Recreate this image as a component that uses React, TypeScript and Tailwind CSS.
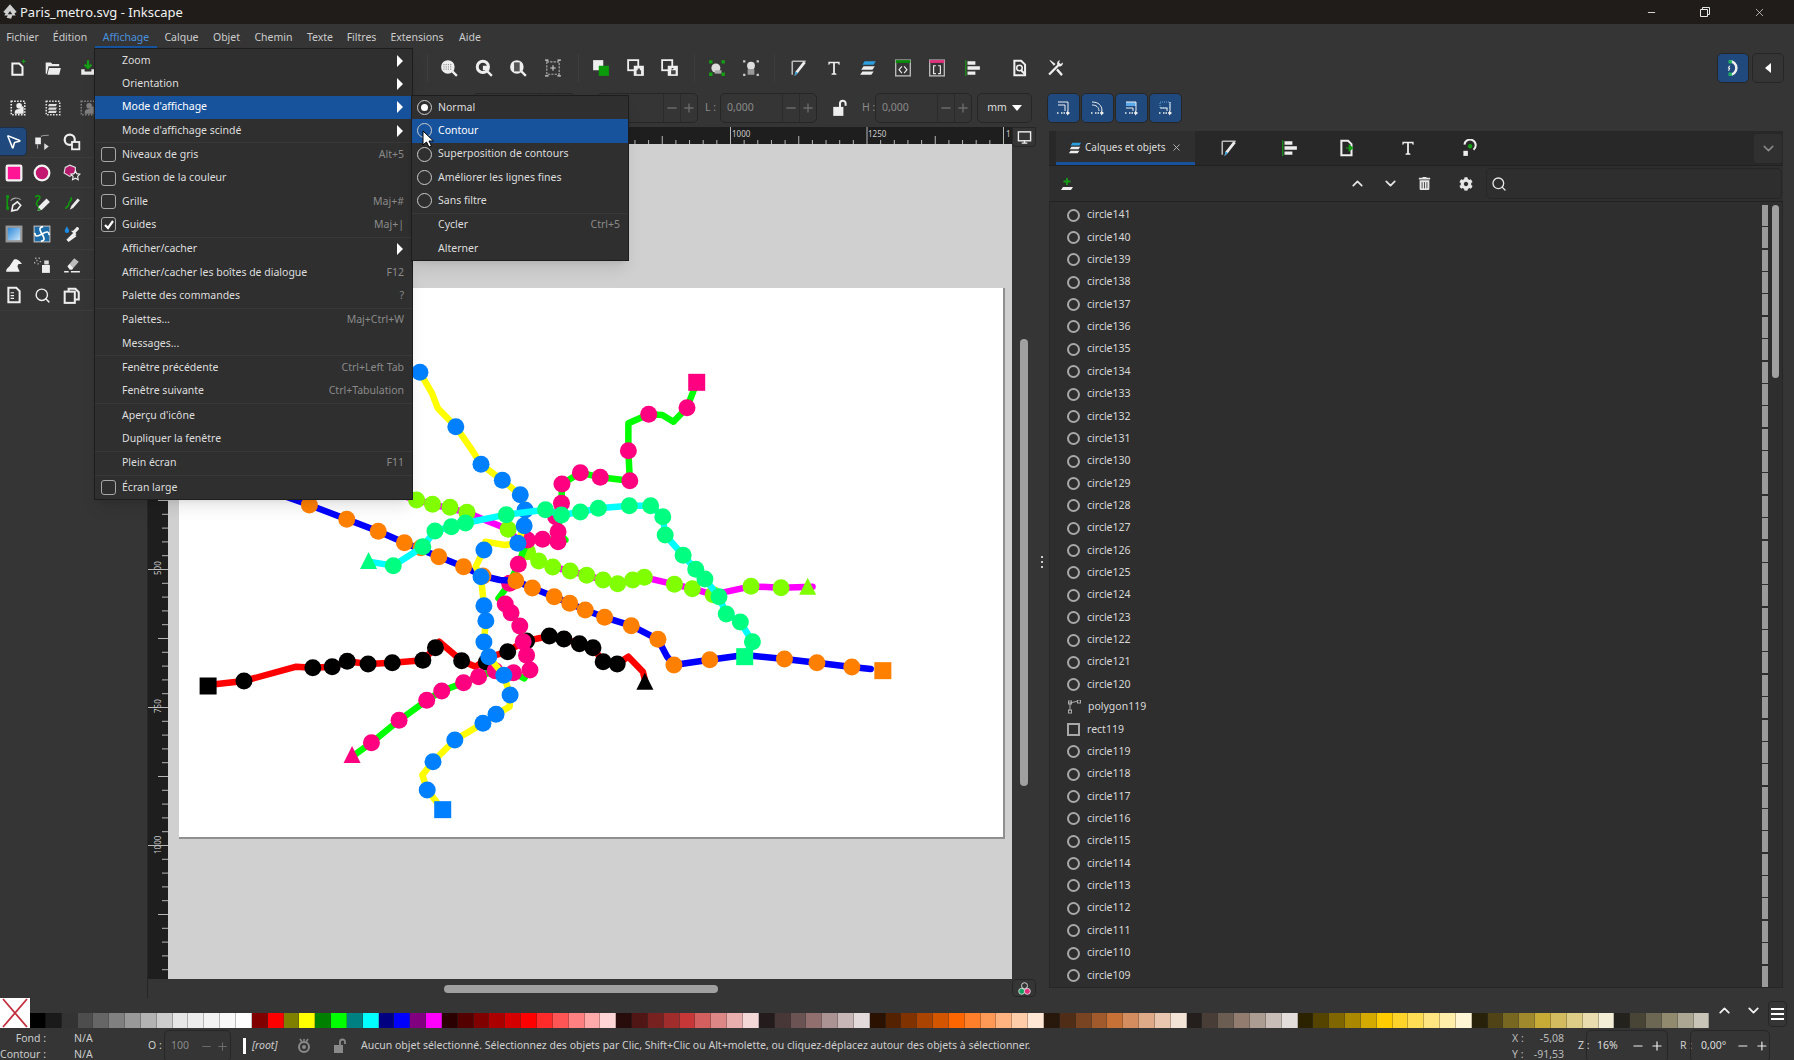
import type { ReactNode } from 'react';
import { ChevronDown, ChevronUp, Minus, MousePointer2, Plus, Search, X } from 'lucide-react';
import { FaCog, FaTrashAlt } from 'react-icons/fa';

type Pt = [number, number];

// map data is measured in a stretched crop, px() brings it back to page pixels
const px = ([x, y]: Pt): Pt => [160 + x / 2.063 - 178.4, 360 + y / 3 - 288];

function Icon({ children, size = 18 }: { children: ReactNode; size?: number }) {
    return (
        <svg viewBox="0 0 16 16" width={size} height={size} className="shrink-0">
            {children}
        </svg>
    );
}

const icons: Record<string, ReactNode> = {
    newDoc: (
        <>
            <path d="M3 4h6l3 3v7H3z" fill="none" stroke="#f2f2f2" strokeWidth="1.8" />
            <path d="M13 0l.7 1.6 1.6.4-1.6.7-.7 1.6-.7-1.6-1.6-.7 1.6-.4z" fill="#14a014" />
        </>
    ),
    open: <path d="M1.5 3h4.5l1.5 1.5h6v2H4L2.5 13h-1zM4.5 8h10.5l-1.5 6H3z" fill="#ececec" />,
    save: (
        <>
            <path d="M2 9h3v2h6V9h3v5H2z" fill="#ececec" />
            <path d="M8 1v7M5 5l3 3 3-3" fill="none" stroke="#14a014" strokeWidth="2" />
        </>
    ),
    selAll: (
        <>
            <rect x="2" y="2" width="12" height="12" fill="none" stroke="#eee" strokeWidth="1.4" strokeDasharray="1.4 1.2" />
            <path d="M5 13c0-3 1-4 3-4 3 0 3-4 5-2v6z" fill="#eee" />
            <circle cx="9" cy="6" r="2.5" fill="#eee" />
        </>
    ),
    layers: (
        <>
            <rect x="2" y="2" width="12" height="12" fill="none" stroke="#ddd" strokeWidth="1.4" strokeDasharray="1.4 1.2" />
            <path d="M4.5 4.5h7l-1 2h-7zM4.5 7.5h7l-1 2h-7zM4.5 10.5h7l-1 2h-7z" fill="#ddd" />
        </>
    ),
    zoomSel: (
        <>
            <circle cx="7" cy="7" r="6" fill="#eee" />
            <path d="M3 5h8M3 7h8M3 9h8" stroke="#666" strokeWidth=".7" strokeDasharray="1 1" />
            <path d="M11 11l4 4" stroke="#eee" strokeWidth="2" />
        </>
    ),
    zoomDraw: (
        <>
            <circle cx="7" cy="7" r="5" fill="none" stroke="#eee" strokeWidth="2.6" />
            <path d="M7 6h4v4H7z" fill="#eee" />
            <path d="M11 11l4 4" stroke="#eee" strokeWidth="2" />
        </>
    ),
    zoomPage: (
        <>
            <circle cx="7" cy="7" r="6" fill="#eee" />
            <rect x="4.5" y="3" width="5" height="8" fill="#555" />
            <path d="M11 11l4 4" stroke="#eee" strokeWidth="2" />
        </>
    ),
    center: (
        <>
            <rect x="2.5" y="2.5" width="11" height="11" fill="none" stroke="#aaa" strokeDasharray="2 1" />
            <path d="M8 5.5v5M5.5 8h5" stroke="#ccc" />
            <path d="M1 1h3M12 1h3M1 15h3M12 15h3" stroke="#ddd" />
        </>
    ),
    groupCol: (
        <>
            <rect x="1" y="1" width="9" height="9" fill="#eee" />
            <rect x="6" y="6" width="9" height="9" fill="#0a9a0a" />
        </>
    ),
    duplicate: (
        <>
            <rect x="1" y="1" width="9" height="9" fill="none" stroke="#eee" strokeWidth="1.6" />
            <rect x="6" y="6" width="9" height="9" fill="#eee" />
            <path d="M8.5 10h4v3.5h-4zM9.5 10V8.5h2V10" fill="#444" />
        </>
    ),
    unlink: (
        <>
            <rect x="1" y="1" width="9" height="9" fill="none" stroke="#eee" strokeWidth="1.6" />
            <rect x="6" y="6" width="9" height="9" fill="#eee" />
            <path d="M9 10h4v3.5H9zM9.5 10V8h2" fill="#444" />
        </>
    ),
    group: (
        <>
            <circle cx="7" cy="8" r="4" fill="#ddd" />
            <path d="M6 10h6v3H6z" fill="#aaa" />
            <path d="M1 1h3v3H1zM12 1h3v3h-3zM1 12h3v3H1zM12 12h3v3h-3z" fill="#14a014" />
        </>
    ),
    ungroup: (
        <>
            <circle cx="8" cy="6" r="3.5" fill="#ddd" />
            <path d="M5 9h6v5H5z" fill="#999" />
            <path d="M1 1h2v2H1zM13 1h2v2h-2zM1 13h2v2H1zM13 13h2v2h-2z" fill="#ccc" />
        </>
    ),
    fillStroke: (
        <>
            <path d="M2 2h12M2 2v12" stroke="#bbb" strokeWidth="1.4" fill="none" />
            <path d="M4 15l1-4 7-9 2 1.5-7 9z" fill="#eee" />
            <path d="M4 15l1-4 2 1.500z" fill="#2b9fe0" />
        </>
    ),
    text: <path d="M3 2.500h10v2.500h-.8l-.6-1.200H8.800v8.700l1.400.7v.8H5.800v-.8l1.400-.7V3.800H4.400L3.800 5H3z" fill="#eee" />,
    objects: <path d="M5 2h10l-2 3H3zM4 6.500h10l-2 3H2zM3 11h10l-2 3H1z" fill="#eee" />,
    objectsBlue: (
        <>
            <path d="M5 2h10l-2 3H3z" fill="#2b9fe0" />
            <path d="M4 6.500h10l-2 3H2zM3 11h10l-2 3H1z" fill="#eee" />
        </>
    ),
    xml: (
        <>
            <rect x="1.500" y="1" width="13" height="14" fill="none" stroke="#bbb" strokeWidth="1.200" />
            <rect x="1.500" y="1" width="13" height="2.500" fill="#0a8a0a" />
            <path d="M7 6.500L4.500 9.500 7 12.500M9 6.500l2.500 3-2.500 3" fill="none" stroke="#eee" />
        </>
    ),
    css: (
        <>
            <rect x="1.500" y="1" width="13" height="14" fill="none" stroke="#bbb" strokeWidth="1.200" />
            <rect x="1.500" y="1" width="13" height="2.500" fill="#e0307e" />
            <path d="M7 6H5v7h2M9 6h2v7H9" fill="none" stroke="#eee" />
        </>
    ),
    align: (
        <>
            <path d="M2.500 1v14" stroke="#14a014" />
            <path d="M4 2h7v3H4zM4 6.500h11v3H4zM4 11h7v3H4z" fill="#eee" />
        </>
    ),
    doc: (
        <>
            <path d="M3 1.500h6l3.500 3.500v9.500H3z" fill="none" stroke="#eee" strokeWidth="1.800" />
            <circle cx="7.500" cy="8" r="2.500" fill="none" stroke="#eee" strokeWidth="1.400" />
            <path d="M9 10l4 4" stroke="#eee" strokeWidth="1.800" />
        </>
    ),
    prefs: (
        <path
            d="M3 1l4 5 1.500-1.500L4 1zM12.500 1a3 3 0 00-2.500 4L2 13l1.500 1.500 8-8a3 3 0 003.500-3.500l-2 1.500-1.500-1.500zM9 10l4.500 5 1.500-1.500L10.500 8.500z"
            fill="#eee"
        />
    ),
    snap: (
        <>
            <path d="M5 2a6 6 0 110 12" fill="none" stroke="#eee" strokeWidth="2.200" />
            <path d="M4 1h3v3H4zM4 12h3v3H4z" fill="#20b060" />
            <path d="M5 6l-1 2 1 .500-1 2" fill="none" stroke="#eee" />
        </>
    ),
    snapA: (
        <>
            <path d="M2 2h10v9M2 5h7v6" fill="none" stroke="#eee" />
            <path d="M1 13h2M5 13h6" stroke="#eee" strokeWidth="1.500" strokeDasharray="1.500 1" />
            <path d="M11 10.500l3 2.500-3 2.500z" fill="#eee" />
        </>
    ),
    snapB: (
        <>
            <path d="M2 2c6 0 10 3 10 9M2 5c4 0 7 2 7 6" fill="none" stroke="#eee" />
            <path d="M1 13h2M5 13h6" stroke="#eee" strokeWidth="1.500" strokeDasharray="1.500 1" />
            <path d="M11 10.500l3 2.500-3 2.500z" fill="#eee" />
        </>
    ),
    snapC: (
        <>
            <rect x="2" y="2" width="10" height="4" fill="#5aa8ea" />
            <path d="M2 2h10v9M2 8h7v3" fill="none" stroke="#eee" />
            <path d="M1 13h2M5 13h6" stroke="#eee" strokeWidth="1.500" strokeDasharray="1.500 1" />
            <path d="M11 10.500l3 2.500-3 2.500z" fill="#eee" />
        </>
    ),
    snapD: (
        <>
            <rect x="2" y="2" width="10" height="6" fill="none" stroke="#5aa8ea" strokeDasharray="1 1" />
            <path d="M2 8h7v3M12 2v9" fill="none" stroke="#eee" />
            <path d="M1 13h2M5 13h6" stroke="#eee" strokeWidth="1.500" strokeDasharray="1.500 1" />
            <path d="M11 10.500l3 2.500-3 2.500z" fill="#eee" />
        </>
    ),
    node: (
        <>
            <rect x="2" y="4" width="5" height="6" fill="#eee" />
            <path d="M7 3c2-1 5-1 7-1M4 10v4" fill="none" stroke="#999" />
            <path d="M10 9v6l4-3z" fill="#ddd" />
        </>
    ),
    shapes: (
        <>
            <circle cx="6" cy="6" r="4.500" fill="none" stroke="#eee" strokeWidth="2" />
            <rect x="8" y="8" width="6.500" height="6.500" fill="#353535" stroke="#eee" strokeWidth="1.600" />
        </>
    ),
    rect: <rect x="1.500" y="1.500" width="13" height="13" rx="1" fill="#ff1493" stroke="#f2f2f2" strokeWidth="2" />,
    circle: <circle cx="8" cy="8" r="6.500" fill="#c2186f" stroke="#f2f2f2" strokeWidth="2" />,
    star: (
        <>
            <path d="M6 1l5 2v5l-5 3-5-3 1-5z" fill="#b31a6c" stroke="#ddd" />
            <path d="M11 6l1.200 2.600 2.800.400-2 2 .500 3-2.500-1.400-2.500 1.400.500-3-2-2 2.800-.400z" fill="#333" stroke="#eee" />
        </>
    ),
    pen: (
        <>
            <path d="M2 4v8" stroke="#0f9a0f" strokeWidth="1.400" />
            <path d="M1 1h2.500v3H1zM1 11h2.500v3H1z" fill="#0f9a0f" />
            <path d="M5 6c2-3 6-3 9-1" fill="none" stroke="#aaa" />
            <path d="M6 15l1-5 4-3 3 3-3 4z" fill="none" stroke="#eee" strokeWidth="1.400" />
        </>
    ),
    pencil: (
        <>
            <path d="M2 3c2-3 6-1 3 2s-2 5 0 6" fill="none" stroke="#0f9a0f" strokeWidth="1.500" />
            <path d="M4 15l1-4 7-7 3 3-7 7z" fill="#eee" />
            <path d="M4 15l1-3 2 2z" fill="#0f9a0f" />
        </>
    ),
    calli: (
        <>
            <path d="M7 3c2 3-3 4-2 7l-3 3" fill="none" stroke="#0f9a0f" strokeWidth="1.500" />
            <path d="M6 14l1.500-3.500L13 4l2 1.500-6 7z" fill="#eee" />
        </>
    ),
    gradient: (
        <>
            <defs>
                <linearGradient id="gr" x1="0" y1="0" x2="1" y2="1">
                    <stop offset="0" stopColor="#1e80d8" />
                    <stop offset="1" stopColor="#d8eefc" />
                </linearGradient>
            </defs>
            <rect x="1.500" y="1.500" width="13" height="13" fill="url(#gr)" stroke="#999" strokeWidth="2" />
        </>
    ),
    mesh: (
        <>
            <rect x="1" y="1" width="14" height="14" fill="#1b6ca8" stroke="#bbb" />
            <path d="M8 8C5 3 6 2 9 1.500M8 8c5-3 6-2 6.500 1M8 8c3 5 2 6-1 6.500M8 8c-5 3-6 2-6.500-1" fill="none" stroke="#fff" strokeWidth="1.500" />
        </>
    ),
    dropper: (
        <>
            <path d="M3.500 1c1 2 2 3 2 4a2 2 0 01-4 0c0-1 1-2 2-4z" fill="#1e8ae0" />
            <path d="M5 15l-2-2 6-6 3 3zM9 5l2-2 1-1c1-1 3 1 2 2l-3 3 1 1-1 1-4-4z" fill="#eee" />
        </>
    ),
    bucket: <path d="M1 14c0-3 2-4 3-5l4-6c3-1 6 2 7 4h-3l-1 2 2 5z" fill="#f0f0f0" />,
    spray: (
        <>
            <rect x="8" y="8" width="7" height="7" fill="#eee" />
            <rect x="10" y="4" width="4" height="3.500" fill="#ddd" />
            <path d="M2 2h1M5 2h1M3 4h1M6 5h1M1 6h1M4 7h1" stroke="#bbb" strokeWidth="1.200" />
        </>
    ),
    eraser: (
        <>
            <path d="M4 9l6-7 4 3-6 7H6z" fill="#bbb" />
            <path d="M4 9l2 3h2l1-1-3-4z" fill="#eee" />
            <path d="M1 14h4M7 14h8" stroke="#eee" strokeWidth="1.200" />
        </>
    ),
    page: (
        <>
            <path d="M3 1.500h7l3 3v10H3z" fill="none" stroke="#eee" strokeWidth="1.800" />
            <path d="M5 6h3M5 8.500h3M5 11h3" stroke="#eee" />
        </>
    ),
    pages: (
        <>
            <rect x="1.500" y="5" width="9" height="10" fill="none" stroke="#eee" strokeWidth="1.800" />
            <path d="M5 5V2.500h6l3 3V12h-3.500" fill="none" stroke="#eee" strokeWidth="1.800" />
        </>
    ),
    exportTab: (
        <>
            <path d="M3 1.500h6l3 3v10H3z" fill="none" stroke="#eee" strokeWidth="1.800" />
            <path d="M7 8h5M10 5.500L13 8l-3 2.500z" stroke="#14a014" fill="#14a014" />
        </>
    ),
    history: (
        <>
            <path d="M4 5a5 5 0 118 4.500" fill="none" stroke="#eee" strokeWidth="1.800" />
            <rect x="3" y="10.500" width="4" height="4.500" fill="#eee" />
            <circle cx="9" cy="6.500" r="2" fill="#14a014" />
        </>
    ),
    layerAdd: (
        <>
            <path d="M5 11h10l-2 3H3z" fill="#eee" />
            <path d="M9 2v7M5.500 5.500h7" stroke="#14a014" strokeWidth="1.800" />
        </>
    ),
    colorMgmt: (
        <>
            <circle cx="8" cy="5" r="3.200" fill="none" stroke="#ddd" />
            <circle cx="5" cy="11" r="3.200" fill="#14a060" stroke="#ddd" />
            <circle cx="11" cy="11" r="3.200" fill="#e0307e" stroke="#ddd" />
        </>
    ),
    monitor: (
        <>
            <rect x="1.500" y="2" width="13" height="9.500" fill="none" stroke="#eee" strokeWidth="1.500" />
            <path d="M5 14h6M8 11.500V14" stroke="#eee" strokeWidth="1.500" />
        </>
    ),
    lockOpen: (
        <>
            <rect x="2" y="7" width="9" height="8" fill="currentColor" />
            <path d="M8 7V4a2.500 2.500 0 015 0v2" fill="none" stroke="currentColor" strokeWidth="1.800" />
        </>
    ),
    eye: (
        <>
            <circle cx="8" cy="9" r="5" fill="none" stroke="currentColor" strokeWidth="2" />
            <circle cx="8" cy="9" r="2" fill="currentColor" />
            <path d="M4 1l2 3M12 1l-2 3M8 1v2" stroke="currentColor" strokeWidth="1.500" />
        </>
    ),
};

const menuItems = [
    { label: 'Fichier', w: 45 },
    { label: 'Édition', w: 50 },
    { label: 'Affichage', w: 62, active: true },
    { label: 'Calque', w: 49 },
    { label: 'Objet', w: 41 },
    { label: 'Chemin', w: 53 },
    { label: 'Texte', w: 40 },
    { label: 'Filtres', w: 43 },
    { label: 'Extensions', w: 68 },
    { label: 'Aide', w: 38 },
];

type Entry = { label: string; shortcut?: string; sub?: boolean; check?: boolean; checked?: boolean; active?: boolean };

const viewMenu: Entry[][] = [
    [
        { label: 'Zoom', sub: true },
        { label: 'Orientation', sub: true },
        { label: "Mode d'affichage", sub: true, active: true },
        { label: "Mode d'affichage scindé", sub: true },
    ],
    [
        { label: 'Niveaux de gris', shortcut: 'Alt+5', check: true },
        { label: 'Gestion de la couleur', check: true },
        { label: 'Grille', shortcut: 'Maj+#', check: true },
        { label: 'Guides', shortcut: 'Maj+|', check: true, checked: true },
    ],
    [
        { label: 'Afficher/cacher', sub: true },
        { label: 'Afficher/cacher les boîtes de dialogue', shortcut: 'F12' },
        { label: 'Palette des commandes', shortcut: '?' },
    ],
    [{ label: 'Palettes...', shortcut: 'Maj+Ctrl+W' }, { label: 'Messages...' }],
    [
        { label: 'Fenêtre précédente', shortcut: 'Ctrl+Left Tab' },
        { label: 'Fenêtre suivante', shortcut: 'Ctrl+Tabulation' },
    ],
    [{ label: "Aperçu d'icône" }, { label: 'Dupliquer la fenêtre' }],
    [{ label: 'Plein écran', shortcut: 'F11' }],
    [{ label: 'Écran large', check: true }],
];

const toolRows = [
    ['selector', 'node', 'shapes'],
    ['rect', 'circle', 'star'],
    ['pen', 'pencil', 'calli'],
    ['gradient', 'mesh', 'dropper'],
    ['bucket', 'spray', 'eraser'],
    ['page', 'zoom', 'pages'],
];

const layerNames = [
    ...Array.from({ length: 22 }, (_, i) => `circle${141 - i}`),
    'polygon119',
    'rect119',
    ...Array.from({ length: 11 }, (_, i) => `circle${119 - i}`),
];

const swatches = [
    '#000000', '#1a1a1a', '#333333', '#4d4d4d', '#666666', '#808080', '#999999', '#b3b3b3', '#cccccc', '#e6e6e6', '#ececec', '#f2f2f2', '#f9f9f9', '#ffffff',
    '#800000', '#ff0000', '#808000', '#ffff00', '#008000', '#00ff00', '#008080', '#00ffff', '#000080', '#0000ff', '#800080', '#ff00ff',
    '#2b0000', '#550000', '#800000', '#aa0000', '#d40000', '#ff0000', '#ff2a2a', '#ff5555', '#ff8080', '#ffaaaa', '#ffd5d5',
    '#280b0b', '#501616', '#782121', '#a02c2c', '#c83737', '#d35f5f', '#de8787', '#e9afaf', '#f4d7d7',
    '#241c1c', '#483737', '#6c5353', '#916f6f', '#ac9393', '#c8b7b7', '#e3dbdb',
    '#2b1100', '#552200', '#803300', '#aa4400', '#d45500', '#ff6600', '#ff7f2a', '#ff9955', '#ffb380', '#ffccaa', '#ffe6d5',
    '#28170b', '#502d16', '#784421', '#a05a2c', '#c87137', '#d38d5f', '#deaa87', '#e9c6af', '#f4e3d7',
    '#241f1c', '#483e37', '#6c5d53', '#917c6f', '#ac9d93', '#c8beb7', '#e3dedb',
    '#2b2200', '#554400', '#806600', '#aa8800', '#d4aa00', '#ffcc00', '#ffd42a', '#ffdd55', '#ffe680', '#ffeeaa', '#fff6d5',
    '#28220b', '#504416', '#786721', '#a0892c', '#c8ab37', '#d3bc5f', '#decd87', '#e9ddaf', '#f4eed7',
    '#24221c', '#484537', '#6c6753', '#918a6f', '#aca793', '#c8c4b7',
];

const metroLines: { line: string; dot: string; path: Pt[]; stops: Pt[] }[] = [
    {
        line: '#ff0000',
        dot: '#000000',
        path: [[98, 975], [172, 963], [280, 920], [314, 923], [354, 920], [385, 904], [428, 912], [478, 908], [541, 901], [567, 863], [575, 845], [621, 902], [650, 920], [678, 891], [716, 875], [748, 845], [802, 828], [832, 837], [864, 851], [892, 863], [913, 905], [942, 912], [965, 890], [995, 935], [1000, 965]],
        stops: [[172, 963], [314, 923], [354, 920], [385, 904], [428, 912], [478, 908], [541, 901], [567, 863], [621, 902], [672, 907], [716, 875], [755, 843], [802, 828], [832, 837], [864, 851], [892, 863], [913, 905], [942, 912]],
    },
    {
        line: '#ff00ff',
        dot: '#80ff00',
        path: [[505, 410], [561, 433], [632, 457], [660, 475], [717, 508], [757, 575], [780, 603], [809, 621], [845, 633], [879, 646], [913, 660], [943, 671], [974, 660], [998, 652], [1060, 673], [1097, 686], [1140, 704], [1218, 679], [1280, 683], [1345, 680]],
        stops: [[528, 420], [561, 433], [597, 442], [632, 457], [717, 508], [757, 575], [780, 603], [809, 621], [845, 633], [879, 646], [913, 660], [943, 671], [974, 660], [998, 652], [1060, 673], [1097, 686], [1140, 704], [1218, 679], [1280, 683]],
    },
    {
        line: '#00ff00',
        dot: '#ff0080',
        path: [[1106, 67], [1086, 143], [1058, 185], [1035, 165], [1007, 163], [965, 190], [965, 272], [968, 362], [907, 352], [866, 338], [828, 372], [827, 430], [820, 515], [835, 540], [788, 538], [757, 540], [738, 613], [720, 670], [697, 715], [711, 732], [723, 758], [741, 798], [748, 845], [755, 886], [762, 930], [750, 955], [728, 938], [690, 932], [656, 950], [625, 968], [580, 993], [549, 1021], [492, 1081], [435, 1148], [395, 1190]],
        stops: [[1086, 143], [1007, 163], [965, 272], [968, 362], [907, 352], [866, 338], [828, 372], [827, 430], [815, 470], [820, 515], [820, 545], [788, 538], [757, 540], [738, 613], [720, 670], [711, 732], [723, 758], [741, 798], [748, 845], [755, 886], [762, 930], [728, 938], [690, 932], [656, 950], [625, 968], [580, 993], [549, 1021], [492, 1081], [435, 1148]],
    },
    {
        line: '#0000ff',
        dot: '#ff8000',
        path: [[240, 400], [307, 435], [384, 478], [449, 514], [503, 548], [574, 590], [625, 620], [665, 648], [700, 660], [733, 662], [767, 684], [812, 710], [844, 730], [876, 750], [916, 772], [971, 797], [1026, 838], [1045, 890], [1059, 915], [1133, 899], [1205, 885], [1287, 897], [1354, 908], [1426, 921], [1465, 927]],
        stops: [[307, 435], [384, 478], [449, 514], [503, 548], [537, 563], [574, 590], [625, 620], [665, 648], [733, 662], [767, 684], [812, 710], [844, 730], [876, 750], [916, 772], [971, 797], [1026, 838], [1059, 915], [1133, 899], [1287, 897], [1354, 908], [1426, 921]],
    },
    {
        line: '#ffff00',
        dot: '#0080ff',
        path: [[535, 37], [560, 100], [572, 145], [609, 200], [640, 265], [661, 313], [705, 361], [742, 404], [752, 450], [750, 497], [737, 550], [710, 555], [670, 545], [667, 570], [650, 620], [661, 650], [667, 737], [671, 782], [667, 846], [677, 890], [708, 946], [721, 1005], [720, 1040], [692, 1063], [665, 1090], [607, 1140], [562, 1205], [540, 1245], [550, 1290], [582, 1349]],
        stops: [[535, 37], [609, 200], [661, 313], [705, 361], [742, 404], [752, 450], [750, 497], [737, 550], [667, 570], [661, 650], [667, 737], [671, 782], [667, 846], [677, 890], [708, 946], [721, 1005], [692, 1063], [665, 1090], [607, 1140], [562, 1205], [550, 1290]],
    },
    {
        line: '#00ffff',
        dot: '#00ff80',
        path: [[429, 605], [480, 617], [541, 560], [566, 513], [600, 500], [629, 489], [713, 464], [794, 449], [827, 465], [866, 456], [903, 445], [967, 437], [1011, 437], [1036, 470], [1041, 525], [1078, 586], [1104, 628], [1123, 657], [1152, 710], [1167, 762], [1196, 786], [1221, 845], [1205, 890]],
        stops: [[480, 617], [541, 560], [566, 513], [600, 500], [629, 489], [713, 464], [794, 449], [827, 465], [866, 456], [903, 445], [967, 437], [1011, 437], [1036, 470], [1041, 525], [1078, 586], [1104, 628], [1123, 657], [1152, 710], [1167, 762], [1196, 786], [1221, 845]],
    },
];

const metroEnds = [
    { kind: 'rect', at: [98, 978] as Pt, color: '#000000' },
    { kind: 'tri', at: [999, 965] as Pt, color: '#000000' },
    { kind: 'rect', at: [1106, 67] as Pt, color: '#ff0080' },
    { kind: 'tri', at: [395, 1185] as Pt, color: '#ff0080' },
    { kind: 'rect', at: [582, 1349] as Pt, color: '#0080ff' },
    { kind: 'rect', at: [1490, 932] as Pt, color: '#ff8000' },
    { kind: 'rect', at: [1205, 890] as Pt, color: '#00ff80' },
    { kind: 'tri', at: [429, 603] as Pt, color: '#00ff80' },
    { kind: 'tri', at: [1335, 680] as Pt, color: '#80ff00' },
];

function MetroMap() {
    return (
        <svg width="825" height="549" className="absolute inset-0 overflow-visible">
            {metroLines.map((l) => (
                <g key={l.line}>
                    <polyline
                        points={l.path.map((p) => px(p).join(',')).join(' ')}
                        fill="none"
                        stroke={l.line}
                        strokeWidth="6.500"
                        strokeLinejoin="round"
                        strokeLinecap="round"
                    />
                    {l.stops.map((s, i) => {
                        const [x, y] = px(s);
                        return <circle key={i} cx={x} cy={y} r="8.500" fill={l.dot} />;
                    })}
                </g>
            ))}
            {metroEnds.map((e, i) => {
                const [x, y] = px(e.at);
                return e.kind === 'rect' ? (
                    <rect key={i} x={x - 8.5} y={y - 8.5} width="17" height="17" fill={e.color} />
                ) : (
                    <polygon key={i} points={`${x},${y - 9} ${x - 8.5},${y + 8} ${x + 8.5},${y + 8}`} fill={e.color} />
                );
            })}
        </svg>
    );
}

function CmdIcon({ name, w = 'w-[34.500px]' }: { name: string; w?: string }) {
    return <div className={`flex items-center justify-center ${w}`}>{<Icon>{icons[name]}</Icon>}</div>;
}

function NumberBox({ value, w }: { value: string; w: string }) {
    return (
        <div className={`flex h-[30px] items-center rounded-[5px] border border-[#262626] ${w}`}>
            <span className="flex-1 pl-[6px] text-[#8a8a8a]">{value}</span>
            <span className="flex h-full w-[17px] items-center justify-center border-l border-[#2b2b2b]">
                <Minus size={14} strokeWidth={2.4} className="text-[#6a6a6a]" />
            </span>
            <span className="flex h-full w-[17px] items-center justify-center border-l border-[#2b2b2b]">
                <Plus size={14} strokeWidth={2.4} className="text-[#6a6a6a]" />
            </span>
        </div>
    );
}

function SnapButton({ name }: { name: string }) {
    return (
        <div className="flex h-[30px] w-[33px] items-center justify-center rounded-[5px] border border-[#262626] bg-[#204a7e]">
            <Icon size={16}>{icons[name]}</Icon>
        </div>
    );
}

function Ruler() {
    const ticks = Array.from({ length: 62 }, (_, i) => i);
    return (
        <svg width="844" height="17" className="block">
            {ticks.map((i) => {
                const x = 16.5 + i * 13.65;
                const major = i % 10 === 0;
                return <line key={i} x1={x} x2={x} y1={major ? 0 : i % 5 === 0 ? 9 : 13} y2="17" stroke="#dddddd" strokeWidth="0.800" />;
            })}
            <text x="564" y="10" fill="#cccccc" fontSize="8">1000</text>
            <text x="700" y="10" fill="#cccccc" fontSize="8">1250</text>
            <text x="838" y="10" fill="#cccccc" fontSize="8">1</text>
        </svg>
    );
}

function VRuler() {
    const ticks = Array.from({ length: 62 }, (_, i) => i);
    return (
        <svg width="20" height="835" className="block">
            {ticks.map((i) => {
                const y = 11.5 + i * 13.8;
                const major = i % 10 === 0;
                return <line key={i} y1={y} y2={y} x1={major ? 0 : i % 5 === 0 ? 10 : 14} x2="20" stroke="#dddddd" strokeWidth="0.800" />;
            })}
            <text transform="translate(13 431) rotate(-90)" fill="#cccccc" fontSize="8">500</text>
            <text transform="translate(13 569) rotate(-90)" fill="#cccccc" fontSize="8">750</text>
            <text transform="translate(13 710) rotate(-90)" fill="#cccccc" fontSize="8">1000</text>
        </svg>
    );
}

function Tool({ name }: { name: string }) {
    if (name === 'selector') {
        return (
            <div className="flex h-[29px] w-[27px] items-center justify-center rounded-r-[5px] border border-l-0 border-[#1c2f47] bg-[#204a7e]">
                <MousePointer2 size={17} strokeWidth={2.2} className="text-white" />
            </div>
        );
    }
    if (name === 'zoom') {
        return <Search size={17} strokeWidth={2} className="text-[#eeeeee]" />;
    }
    return <Icon>{icons[name]}</Icon>;
}

function ViewMenu() {
    return (
        <div className="absolute left-[94px] top-[48px] z-10 w-[319px] border border-[#1d1d1d] bg-[#2f2f2f] text-[#dedede] shadow-lg">
            {viewMenu.map((group, gi) => (
                <div key={gi} className={gi > 0 ? 'border-t border-[#383838]' : ''}>
                    {group.map((item) => (
                        <div
                            key={item.label}
                            className={`relative flex h-[23.330px] items-center pl-[27px] pr-[8px] ${item.active ? 'bg-[#17539d] text-white' : ''}`}
                        >
                            {item.check && (
                                <span className="absolute left-[6px] flex h-[15px] w-[15px] items-center justify-center rounded-[3px] border border-[#a8a8a8]">
                                    {item.checked && (
                                        <svg viewBox="0 0 12 12" width="12" height="12">
                                            <path d="M2 6l3 3 5-7" fill="none" stroke="#ffffff" strokeWidth="2.200" />
                                        </svg>
                                    )}
                                </span>
                            )}
                            <span className="flex-1">{item.label}</span>
                            {item.shortcut && <span className="text-[#8a8a8a]">{item.shortcut}</span>}
                            {item.sub && (
                                <span className="mr-[1px] h-0 w-0 border-y-[6px] border-l-[6px] border-y-transparent border-l-white" />
                            )}
                        </div>
                    ))}
                </div>
            ))}
        </div>
    );
}

function RenderModeMenu() {
    const modes = ['Normal', 'Contour', 'Superposition de contours', 'Améliorer les lignes fines', 'Sans filtre'];
    return (
        <div className="absolute left-[411px] top-[95px] z-20 w-[218px] border border-[#1d1d1d] bg-[#2f2f2f] text-[#dedede] shadow-lg">
            {modes.map((m, i) => (
                <div key={m} className={`relative flex h-[23.330px] items-center pl-[26px] ${i === 1 ? 'bg-[#17539d] text-white' : ''}`}>
                    <span className="absolute left-[5px] flex h-[15px] w-[15px] items-center justify-center rounded-full border border-[#cccccc]">
                        {i === 0 && <span className="h-[7px] w-[7px] rounded-full bg-white" />}
                    </span>
                    {m}
                </div>
            ))}
            <div className="border-t border-[#383838]">
                <div className="flex h-[23.330px] items-center justify-between pl-[26px] pr-[8px]">
                    <span>Cycler</span>
                    <span className="text-[#8a8a8a]">Ctrl+5</span>
                </div>
                <div className="flex h-[23.330px] items-center pl-[26px]">Alterner</div>
            </div>
            <svg viewBox="0 0 12 18" width="12" height="18" className="absolute left-[10px] top-[34px]">
                <path d="M1 1v14l3.500-3 2.500 5 2.500-1-2.500-5h4.500z" fill="#ffffff" stroke="#000000" strokeWidth="1" />
            </svg>
        </div>
    );
}

export default function App() {
    return (
        <div className="relative flex h-[1060px] w-[1794px] flex-col overflow-hidden whitespace-nowrap bg-[#353535] font-['Noto_Sans',sans-serif] text-[10.500px] text-[#dedede]">
            {/* title bar */}
            <div className="flex h-[24px] items-center bg-[#1f1c19] pl-[1px]">
                <svg viewBox="0 0 16 16" width="18" height="18">
                    <path d="M8 1L2 8l2 1-1 2h3l-1 2 4 1 1-3h3l-1-2 2-1z" fill="#cfcfcf" />
                    <path d="M6 10l2-3 2 3z" fill="#222222" />
                </svg>
                <span className="ml-[1px] mt-[2px] text-[13px] text-[#f2f2f2]">Paris_metro.svg - Inkscape</span>
                <div className="ml-auto flex items-center text-[#e6e6e6]">
                    <div className="flex w-[54px] justify-center">
                        <Minus size={11} />
                    </div>
                    <div className="flex w-[54px] justify-center">
                        <svg viewBox="0 0 10 10" width="10" height="10">
                            <path d="M.5 2.500h7v7h-7zM2.500 2.500v-2h7v7h-2" fill="none" stroke="#e6e6e6" />
                        </svg>
                    </div>
                    <div className="flex w-[54px] justify-center">
                        <X size={13} strokeWidth={1.3} />
                    </div>
                    <div className="w-[8px]" />
                </div>
            </div>

            {/* menu bar */}
            <div className="flex h-[24px] items-center text-[#cccccc]">
                {menuItems.map((m) => (
                    <div
                        key={m.label}
                        style={{ width: m.w }}
                        className={`flex h-full items-center justify-center border-b-2 pt-[6px] ${m.active ? 'border-[#17539d] text-[#4a90dc]' : 'border-transparent'}`}
                    >
                        {m.label}
                    </div>
                ))}
            </div>

            {/* command bar */}
            <div className="flex h-[40px] items-center">
                <CmdIcon name="newDoc" w="w-[35px]" />
                <CmdIcon name="open" w="w-[35px]" />
                <CmdIcon name="save" w="w-[35px]" />
                <div className="ml-[322px] h-[28px] w-px bg-[#3d3d3d]" />
                <div className="ml-[4px] flex">
                    <CmdIcon name="zoomSel" />
                    <CmdIcon name="zoomDraw" />
                    <CmdIcon name="zoomPage" />
                    <CmdIcon name="center" />
                </div>
                <div className="ml-[8px] h-[28px] w-px bg-[#3d3d3d]" />
                <div className="ml-[5px] flex">
                    <CmdIcon name="groupCol" />
                    <CmdIcon name="duplicate" />
                    <CmdIcon name="unlink" />
                </div>
                <div className="ml-[6px] h-[28px] w-px bg-[#3d3d3d]" />
                <div className="ml-[5px] flex">
                    <CmdIcon name="group" />
                    <CmdIcon name="ungroup" />
                </div>
                <div className="ml-[5px] h-[28px] w-px bg-[#3d3d3d]" />
                <div className="ml-[7.500px] flex">
                    <CmdIcon name="fillStroke" />
                    <CmdIcon name="text" />
                    <CmdIcon name="objectsBlue" />
                    <CmdIcon name="xml" />
                    <CmdIcon name="css" />
                    <CmdIcon name="align" />
                </div>
                <div className="ml-[14px] flex">
                    <CmdIcon name="doc" />
                    <CmdIcon name="prefs" />
                </div>
                <div className="ml-auto mr-[10px] flex gap-[3px]">
                    <div className="flex h-[30px] w-[32px] items-center justify-center rounded-[5px] border border-[#262626] bg-[#204a7e]">
                        <Icon>{icons.snap}</Icon>
                    </div>
                    <div className="flex h-[30px] w-[32px] items-center justify-center rounded-[5px] border border-[#262626]">
                        <span className="h-0 w-0 border-y-[5px] border-r-[6px] border-y-transparent border-r-white" />
                    </div>
                </div>
            </div>

            {/* tool controls */}
            <div className="flex h-[39px] items-center">
                <CmdIcon name="selAll" w="w-[35px]" />
                <CmdIcon name="layers" w="w-[35px]" />
                <div className="w-[35px] opacity-40">
                    <CmdIcon name="selAll" w="w-[35px]" />
                </div>
                <div className="ml-[368px]">
                    <NumberBox value="" w="w-[102px]" />
                </div>
                <div className="ml-[22px]">
                    <NumberBox value="" w="w-[101px]" />
                </div>
                <span className="ml-[7px] w-[15px] text-[#8a8a8a]">L :</span>
                <NumberBox value="0,000" w="w-[97px]" />
                <div className="ml-[14px] w-[20px] text-[#eeeeee]">{<Icon>{icons.lockOpen}</Icon>}</div>
                <span className="ml-[11px] w-[13px] text-[#8a8a8a]">H :</span>
                <NumberBox value="0,000" w="w-[97px]" />
                <div className="ml-[5px] flex h-[30px] w-[55px] items-center justify-center gap-[5px] rounded-[5px] border border-[#262626] text-[#dddddd]">
                    mm
                    <span className="h-0 w-0 border-x-[5px] border-t-[6px] border-x-transparent border-t-white" />
                </div>
                <div className="ml-[15px] flex gap-[1px]">
                    <SnapButton name="snapA" />
                    <SnapButton name="snapB" />
                    <SnapButton name="snapC" />
                    <SnapButton name="snapD" />
                </div>
            </div>

            {/* main area */}
            <div className="flex h-[871px]">
                <div className="w-[148px] border-r border-[#262626]">
                    {toolRows.map((row) => (
                        <div key={row[0]} className="flex h-[30.700px] items-center border-b border-[#3c3c3c]">
                            {row.map((t, i) => (
                                <div key={t} className={`flex h-full items-center justify-center ${i === 0 ? 'w-[27px]' : 'w-[30px]'}`}>
                                    <Tool name={t} />
                                </div>
                            ))}
                        </div>
                    ))}
                </div>

                <div className="flex w-[900px] flex-col">
                    <div className="flex h-[852px]">
                        <div className="flex w-[864px] flex-col">
                            <div className="ml-[20px] h-[17px] bg-[#1e1e1e]">
                                <Ruler />
                            </div>
                            <div className="flex h-[835px]">
                                <div className="w-[20px] bg-[#1e1e1e]">
                                    <VRuler />
                                </div>
                                {/* free canvas, the page sits on it */}
                                <div className="relative w-[844px] bg-[#d0d0d0]">
                                    <div className="absolute left-[11.400px] top-[144px] h-[549px] w-[824px] bg-white shadow-[1px_1px_0_1px_#8f8f8f]">
                                        <MetroMap />
                                    </div>
                                </div>
                            </div>
                        </div>
                        <div className="relative flex w-[36px] flex-col">
                            <div className="flex h-[20px] w-[24px] items-center justify-center rounded-b-[4px] border border-[#262626]">
                                <Icon size={15}>{icons.monitor}</Icon>
                            </div>
                            <div className="ml-[8px] mt-[192px] h-[447px] w-[8px] rounded-full bg-[#a0a0a0]" />
                            <div className="absolute left-[29px] top-[429px] flex h-[12px] w-[4px] flex-col justify-between">
                                <span className="h-[2px] w-[2px] rounded-full bg-white" />
                                <span className="h-[2px] w-[2px] rounded-full bg-white" />
                                <span className="h-[2px] w-[2px] rounded-full bg-white" />
                            </div>
                        </div>
                    </div>
                    <div className="flex h-[19px] items-start">
                        <div className="ml-[296px] mt-[6px] h-[8px] w-[274px] rounded-full bg-[#a0a0a0]" />
                        <div className="ml-[294px] flex h-[18px] w-[24px] items-center justify-center rounded-[4px] border border-[#262626]">
                            <Icon size={15}>{icons.colorMgmt}</Icon>
                        </div>
                    </div>
                </div>

                {/* dialog panel */}
                <div className="ml-px mr-[11px] mt-[4px] mb-[10px] flex w-[734px] flex-col">
                    <div className="flex h-[35px] items-stretch border-b border-[#222222] bg-[#282828] pl-[7px] pr-[1px]">
                        <div className="flex w-[139px] items-center gap-[3px] border-b-[3px] border-[#17539d] bg-[#2f2f2f] pl-[12px] pt-[2px]">
                            <Icon size={14}>{icons.objectsBlue}</Icon>
                            <span className="text-[10px] text-[#dddddd]">Calques et objets</span>
                            <X size={11} className="ml-[2px] text-[#bbbbbb]" />
                        </div>
                        <div className="ml-[25px] flex w-[60px] items-center">
                            <Icon>{icons.fillStroke}</Icon>
                        </div>
                        <div className="flex w-[58px] items-center">
                            <Icon>{icons.align}</Icon>
                        </div>
                        <div className="flex w-[61px] items-center">
                            <Icon>{icons.exportTab}</Icon>
                        </div>
                        <div className="flex w-[61px] items-center">
                            <Icon>{icons.text}</Icon>
                        </div>
                        <div className="flex items-center">
                            <Icon>{icons.history}</Icon>
                        </div>
                        <div className="ml-auto flex w-[28px] items-center justify-center self-center rounded-[3px] bg-[#303030] py-[6px]">
                            <ChevronDown size={17} className="text-[#8a8a8a]" />
                        </div>
                    </div>
                    <div className="flex h-[36px] items-center border-b border-[#222222] bg-[#2e2e2e] pl-[9px] pr-[1px]">
                        <Icon size={16}>{icons.layerAdd}</Icon>
                        <ChevronUp size={17} strokeWidth={2.4} className="ml-[275px] text-[#e6e6e6]" />
                        <ChevronDown size={17} strokeWidth={2.4} className="ml-[16px] text-[#e6e6e6]" />
                        <FaTrashAlt size={13} className="ml-[19px] text-[#e6e6e6]" />
                        <FaCog size={14} className="ml-[28px] text-[#e6e6e6]" />
                        <div className="ml-[13px] flex h-[31px] flex-1 items-center rounded-[5px] border border-[#262626] pl-[4px]">
                            <Search size={16} className="text-[#e6e6e6]" />
                        </div>
                    </div>
                    <div className="relative flex-1 overflow-hidden border border-t-0 border-[#262626] bg-[#2e2e2e] pt-[2px]">
                        {layerNames.map((name) => (
                            <div key={name} className="flex h-[22.370px] items-center pl-[17px]">
                                {name.startsWith('polygon') ? (
                                    <svg viewBox="0 0 14 14" width="14" height="14" className="shrink-0">
                                        <path d="M3 2v9M3 3l8-2" stroke="#aaaaaa" fill="none" />
                                        <rect x="1.500" y="1" width="3" height="3" fill="none" stroke="#aaaaaa" />
                                        <rect x="10.500" y="0" width="3" height="3" fill="none" stroke="#aaaaaa" />
                                        <rect x="1.500" y="10" width="3" height="3" fill="none" stroke="#aaaaaa" />
                                    </svg>
                                ) : name.startsWith('rect') ? (
                                    <span className="h-[13px] w-[13px] shrink-0 border-2 border-[#a8a8a8]" />
                                ) : (
                                    <span className="h-[13px] w-[13px] shrink-0 rounded-full border-2 border-[#a8a8a8]" />
                                )}
                                <span className="ml-[7px] text-[#d8d8d8]">{name}</span>
                            </div>
                        ))}
                        {/* scroll strip over the list */}
                        <div className="absolute bottom-0 right-[14px] top-[3px] w-[6px] bg-[repeating-linear-gradient(to_bottom,#9a9a9a_0,#9a9a9a_21px,#2e2e2e_21px,#2e2e2e_22.370px)]" />
                        <div className="absolute right-[3px] top-[3px] h-[173px] w-[7px] rounded-full bg-[#a0a0a0]" />
                    </div>
                </div>
            </div>

            {/* palette */}
            <div className="relative flex h-[30px] items-end">
                <div className="relative h-[30px] w-[30px] bg-white">
                    <svg viewBox="0 0 30 30" width="30" height="30" className="absolute inset-0">
                        <path d="M3 1l24 28M27 1L3 29" stroke="#c2303f" strokeWidth="1.800" />
                    </svg>
                </div>
                <div className="flex h-[15px] w-[1680px]">
                    {swatches.map((c, i) => (
                        <div key={i} className="flex-1 border-r border-[#353535]/30" style={{ backgroundColor: c }} />
                    ))}
                </div>
                <div className="ml-[6px] flex h-full items-center text-[#f0f0f0]">
                    <ChevronUp size={17} strokeWidth={2.6} className="mt-[-6px]" />
                    <ChevronDown size={17} strokeWidth={2.6} className="ml-[12px] mt-[-6px]" />
                    <div className="ml-[6px] mt-[2px] flex h-[26px] w-[19px] flex-col items-center justify-center gap-[3px] rounded-[4px] border border-[#262626]">
                        <span className="h-[2px] w-[13px] bg-white" />
                        <span className="h-[2px] w-[13px] bg-white" />
                        <span className="h-[2px] w-[13px] bg-white" />
                    </div>
                </div>
            </div>

            {/* status bar */}
            <div className="flex h-[32px] items-center pt-[4px]">
                <div className="grid w-[96px] grid-cols-[46px_1fr] gap-x-[28px] leading-[16px] text-[#cccccc]">
                    <span className="text-right">Fond :</span>
                    <span>N/A</span>
                    <span className="text-right">Contour :</span>
                    <span>N/A</span>
                </div>
                <span className="ml-[52px] w-[16px] text-[#cccccc]">O :</span>
                <div className="flex h-[32px] w-[67px] shrink-0 items-center rounded-[5px] border border-[#262626]">
                    <span className="flex-1 pl-[6px] text-[#8a8a8a]">100</span>
                    <Minus size={13} className="text-[#6a6a6a]" />
                    <Plus size={13} className="ml-[3px] mr-[1px] text-[#6a6a6a]" />
                </div>
                <span className="ml-[12px] h-[16px] w-[3px] bg-white" />
                <span className="ml-[6px] w-[36px] italic text-[#cccccc]">[root]</span>
                <div className="ml-[8px] w-[33px] text-[#8a8a8a]">{<Icon size={16}>{icons.eye}</Icon>}</div>
                <div className="ml-[3px] w-[29px] text-[#8a8a8a]">{<Icon size={16}>{icons.lockOpen}</Icon>}</div>
                <span className="text-[#cfcfcf]">
                    Aucun objet sélectionné. Sélectionnez des objets par Clic, Shift+Clic ou Alt+molette, ou cliquez-déplacez autour des objets à sélectionner.
                </span>
                <div className="ml-auto grid w-[52px] grid-cols-[14px_1fr] items-center leading-[16px] text-[#bbbbbb]">
                    <span>X :</span>
                    <span className="text-right">-5,08</span>
                    <span>Y :</span>
                    <span className="text-right">-91,53</span>
                </div>
                <span className="ml-[14px] w-[8px] text-[#cccccc]">Z :</span>
                <div className="flex h-[32px] w-[82px] shrink-0 items-center rounded-[5px] border border-[#262626]">
                    <span className="w-[44px] pl-[10px] text-[#dddddd]">16%</span>
                    <Minus size={14} className="text-[#eeeeee]" />
                    <Plus size={14} className="ml-[5px] text-[#eeeeee]" />
                </div>
                <span className="ml-[12px] w-[10px] text-[#cccccc]">R :</span>
                <div className="mr-[24px] flex h-[32px] w-[80px] shrink-0 items-center rounded-[5px] border border-[#262626]">
                    <span className="w-[46px] pl-[10px] text-[#dddddd]">0,00°</span>
                    <Minus size={14} className="text-[#eeeeee]" />
                    <Plus size={14} className="ml-[5px] text-[#eeeeee]" />
                </div>
            </div>

            <ViewMenu />
            <RenderModeMenu />
        </div>
    );
}
